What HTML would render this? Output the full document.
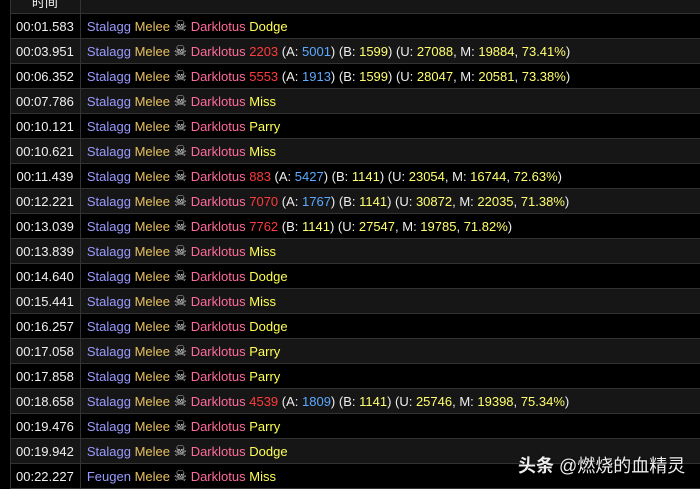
<!DOCTYPE html>
<html><head><meta charset="utf-8"><style>
body{margin:0;background:#000;width:700px;height:489px;overflow:hidden;font-family:"Liberation Sans",Arial,sans-serif;font-size:13px;color:#eee}
table{position:absolute;left:10px;top:-12px;border-collapse:collapse;width:700px}
td{border:1px solid #333;height:24px;padding:0 6px;white-space:nowrap}
td.t{width:57px;text-align:center;padding:0 6px 0 5px;color:#f0f0f0}
tr:nth-child(odd) td{background:#161616}
tr.h td{height:24px;background:#161616;text-align:center}
.s{color:#9a9aff}.m{color:#e8c060}.d{color:#ff6b9a}.y{color:#ffff55}.r{color:#ff3b3b}.b{color:#5aaaff}.n{color:#ffff70}
.k{color:#ddd;font-family:"DejaVu Sans",sans-serif;font-size:15px;line-height:10px}
.wm{position:absolute;left:518px;top:452px;color:#eee;font-size:18px;font-family:"Liberation Sans","Noto Sans CJK SC",sans-serif;text-shadow:0 0 2px #000}
</style></head><body>
<table>
<tr class="h"><td class="t">时间</td><td></td></tr>
<tr style="background:#000"><td class="t" style="background:#000">00:01.583</td><td style="background:#000"><span class="s">Stalagg</span> <span class="m">Melee</span> <span class="k">☠</span> <span class="d">Darklotus</span> <span class="y">Dodge</span></td></tr>
<tr><td class="t">00:03.951</td><td><span class="s">Stalagg</span> <span class="m">Melee</span> <span class="k">☠</span> <span class="d">Darklotus</span> <span class="r">2203</span> (A: <span class="b">5001</span>) (B: <span class="n">1599</span>) (U: <span class="n">27088</span>, M: <span class="n">19884</span>, <span class="n">73.41%</span>)</td></tr>
<tr><td class="t">00:06.352</td><td><span class="s">Stalagg</span> <span class="m">Melee</span> <span class="k">☠</span> <span class="d">Darklotus</span> <span class="r">5553</span> (A: <span class="b">1913</span>) (B: <span class="n">1599</span>) (U: <span class="n">28047</span>, M: <span class="n">20581</span>, <span class="n">73.38%</span>)</td></tr>
<tr><td class="t">00:07.786</td><td><span class="s">Stalagg</span> <span class="m">Melee</span> <span class="k">☠</span> <span class="d">Darklotus</span> <span class="y">Miss</span></td></tr>
<tr><td class="t">00:10.121</td><td><span class="s">Stalagg</span> <span class="m">Melee</span> <span class="k">☠</span> <span class="d">Darklotus</span> <span class="y">Parry</span></td></tr>
<tr><td class="t">00:10.621</td><td><span class="s">Stalagg</span> <span class="m">Melee</span> <span class="k">☠</span> <span class="d">Darklotus</span> <span class="y">Miss</span></td></tr>
<tr><td class="t">00:11.439</td><td><span class="s">Stalagg</span> <span class="m">Melee</span> <span class="k">☠</span> <span class="d">Darklotus</span> <span class="r">883</span> (A: <span class="b">5427</span>) (B: <span class="n">1141</span>) (U: <span class="n">23054</span>, M: <span class="n">16744</span>, <span class="n">72.63%</span>)</td></tr>
<tr><td class="t">00:12.221</td><td><span class="s">Stalagg</span> <span class="m">Melee</span> <span class="k">☠</span> <span class="d">Darklotus</span> <span class="r">7070</span> (A: <span class="b">1767</span>) (B: <span class="n">1141</span>) (U: <span class="n">30872</span>, M: <span class="n">22035</span>, <span class="n">71.38%</span>)</td></tr>
<tr><td class="t">00:13.039</td><td><span class="s">Stalagg</span> <span class="m">Melee</span> <span class="k">☠</span> <span class="d">Darklotus</span> <span class="r">7762</span> (B: <span class="n">1141</span>) (U: <span class="n">27547</span>, M: <span class="n">19785</span>, <span class="n">71.82%</span>)</td></tr>
<tr><td class="t">00:13.839</td><td><span class="s">Stalagg</span> <span class="m">Melee</span> <span class="k">☠</span> <span class="d">Darklotus</span> <span class="y">Miss</span></td></tr>
<tr><td class="t">00:14.640</td><td><span class="s">Stalagg</span> <span class="m">Melee</span> <span class="k">☠</span> <span class="d">Darklotus</span> <span class="y">Dodge</span></td></tr>
<tr><td class="t">00:15.441</td><td><span class="s">Stalagg</span> <span class="m">Melee</span> <span class="k">☠</span> <span class="d">Darklotus</span> <span class="y">Miss</span></td></tr>
<tr><td class="t">00:16.257</td><td><span class="s">Stalagg</span> <span class="m">Melee</span> <span class="k">☠</span> <span class="d">Darklotus</span> <span class="y">Dodge</span></td></tr>
<tr><td class="t">00:17.058</td><td><span class="s">Stalagg</span> <span class="m">Melee</span> <span class="k">☠</span> <span class="d">Darklotus</span> <span class="y">Parry</span></td></tr>
<tr><td class="t">00:17.858</td><td><span class="s">Stalagg</span> <span class="m">Melee</span> <span class="k">☠</span> <span class="d">Darklotus</span> <span class="y">Parry</span></td></tr>
<tr><td class="t">00:18.658</td><td><span class="s">Stalagg</span> <span class="m">Melee</span> <span class="k">☠</span> <span class="d">Darklotus</span> <span class="r">4539</span> (A: <span class="b">1809</span>) (B: <span class="n">1141</span>) (U: <span class="n">25746</span>, M: <span class="n">19398</span>, <span class="n">75.34%</span>)</td></tr>
<tr><td class="t">00:19.476</td><td><span class="s">Stalagg</span> <span class="m">Melee</span> <span class="k">☠</span> <span class="d">Darklotus</span> <span class="y">Parry</span></td></tr>
<tr><td class="t">00:19.942</td><td><span class="s">Stalagg</span> <span class="m">Melee</span> <span class="k">☠</span> <span class="d">Darklotus</span> <span class="y">Dodge</span></td></tr>
<tr><td class="t">00:22.227</td><td><span class="s">Feugen</span> <span class="m">Melee</span> <span class="k">☠</span> <span class="d">Darklotus</span> <span class="y">Miss</span></td></tr>
</table>
<div class="wm"><b>头条</b> @燃烧的血精灵</div>
</body></html>
